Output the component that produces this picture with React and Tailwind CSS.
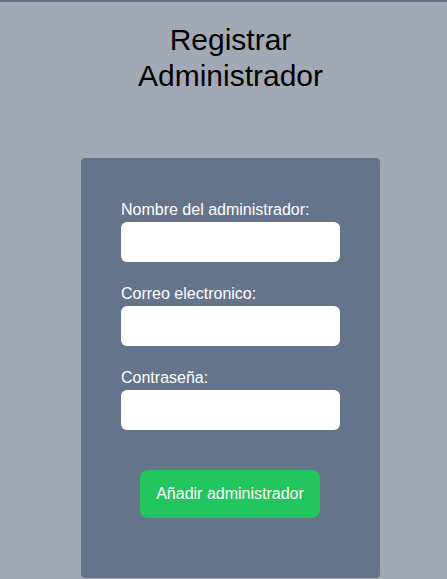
import React from "react";

export default function App() {
  const campos = [
    { label: "Nombre del administrador:", type: "text" },
    { label: "Correo electronico:", type: "email" },
    { label: "Contraseña:", type: "password" },
  ];

  return (
    <div
      className="min-h-screen bg-[#a3a9b4] border-t-2 border-[#64748b] pl-[14px]"
      style={{ fontFamily: '"Liberation Sans", Arial, sans-serif' }}
    >
      {/* Titulo */}
      <h1 className="max-w-[300px] mx-auto mt-5 text-center text-3xl text-black">
        Registrar Administrador
      </h1>

      {/* Formulario */}
      <form className="w-[299px] mx-auto mt-16 bg-[#64748b] rounded px-10 pt-10 pb-[60px] flex flex-col">
        <div className="flex flex-col gap-5">
          {campos.map((campo) => (
            <label key={campo.label} className="flex flex-col text-white text-base leading-6">
              {campo.label}
              <input type={campo.type} className="h-10 w-full bg-white rounded-md outline-none" />
            </label>
          ))}
        </div>
        <button
          type="button"
          className="mt-10 self-start ml-[19px] w-[180px] h-12 bg-[#22c55e] text-white text-base rounded-lg"
        >
          Añadir administrador
        </button>
      </form>
    </div>
  );
}
